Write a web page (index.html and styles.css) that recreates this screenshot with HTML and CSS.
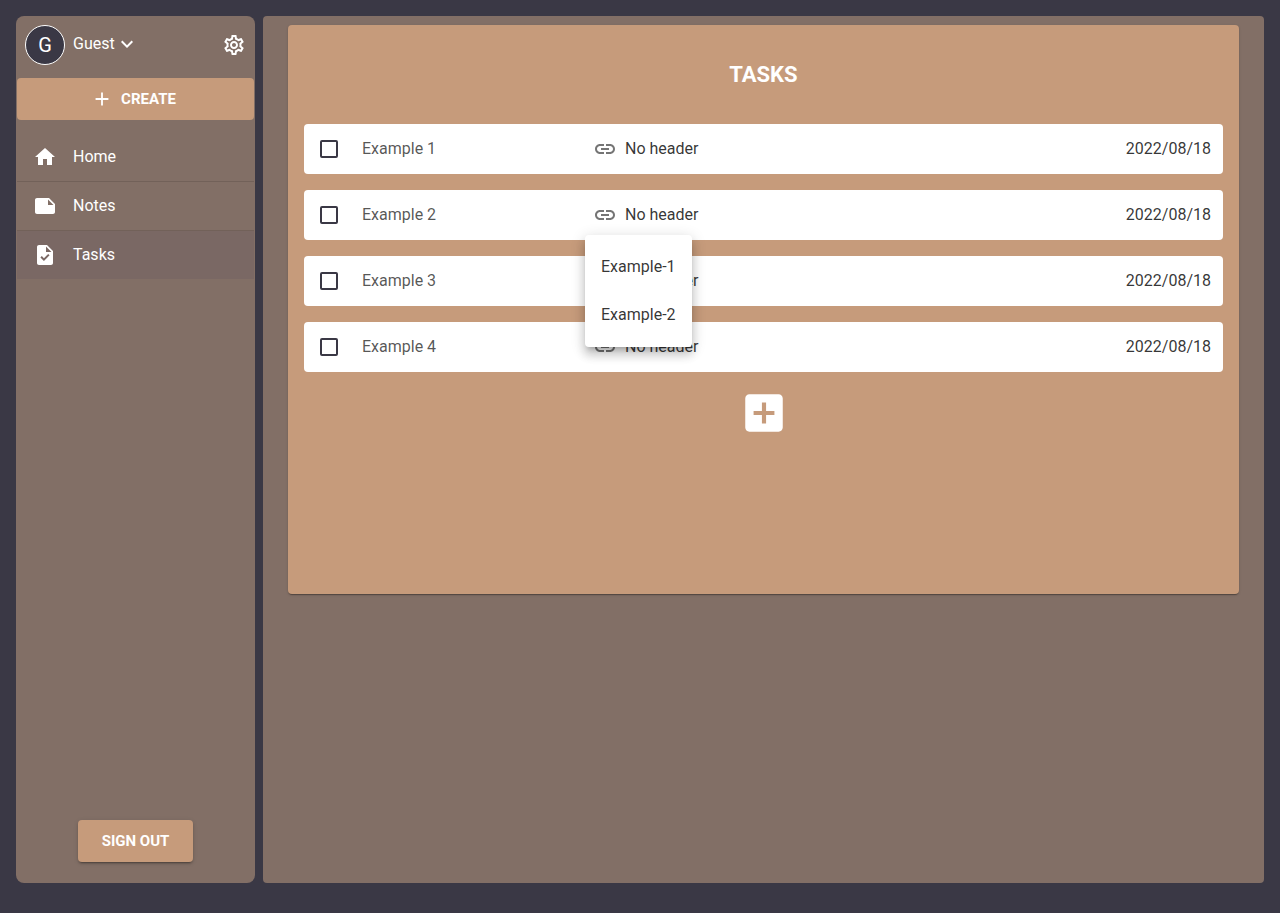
FILE: index.html
```html
<!DOCTYPE html>
<html lang="en">
<head>
  <meta charset="utf-8">
  <meta name="viewport" content="width=device-width, initial-scale=1">
  <title>Tasks</title>
  <link rel="stylesheet" href="styles.css">
</head>
<body>
  <svg class="sprite" aria-hidden="true">
    <symbol id="link" viewBox="0 0 24 24"><path d="M17 7h-4v2h4c1.65 0 3 1.35 3 3s-1.35 3-3 3h-4v2h4c2.76 0 5-2.24 5-5s-2.24-5-5-5zm-6 8H7c-1.65 0-3-1.35-3-3s1.35-3 3-3h4V7H7c-2.76 0-5 2.24-5 5s2.24 5 5 5h4v-2zm-3-4h8v2H8z"/></symbol>
  </svg>
  <div class="app">
    <aside class="sidebar">
      <header class="profile">
        <span class="avatar">G</span>
        <button class="account" type="button">Guest
          <svg class="chevron" viewBox="6 8 12 8" aria-hidden="true"><path d="M7.41 8.59 12 13.17l4.59-4.58L18 10l-6 6-6-6 1.41-1.41z"/></svg>
        </button>
        <button class="settings" type="button" aria-label="Settings">
          <svg class="icon" viewBox="0 0 24 24"><path d="M19.43 12.98c.04-.32.07-.64.07-.98 0-.34-.03-.66-.07-.98l2.11-1.65c.19-.15.24-.42.12-.64l-2-3.46c-.09-.16-.26-.25-.44-.25-.06 0-.12.01-.17.03l-2.49 1c-.52-.4-1.08-.73-1.69-.98l-.38-2.65C14.46 2.18 14.25 2 14 2h-4c-.25 0-.46.18-.49.42l-.38 2.65c-.61.25-1.17.59-1.69.98l-2.49-1c-.06-.02-.12-.03-.18-.03-.17 0-.34.09-.43.25l-2 3.46c-.13.22-.07.49.12.64l2.11 1.65c-.04.32-.07.65-.07.98 0 .33.03.66.07.98l-2.11 1.65c-.19.15-.24.42-.12.64l2 3.46c.09.16.26.25.44.25.06 0 .12-.01.17-.03l2.49-1c.52.4 1.08.73 1.69.98l.38 2.65c.03.24.24.42.49.42h4c.25 0 .46-.18.49-.42l.38-2.65c.61-.25 1.17-.59 1.69-.98l2.49 1c.06.02.12.03.18.03.17 0 .34-.09.43-.25l2-3.46c.12-.22.07-.49-.12-.64l-2.11-1.65zm-1.98-1.71c.04.31.05.52.05.73 0 .21-.02.43-.05.73l-.14 1.13.89.7 1.08.84-.7 1.21-1.27-.51-1.04-.42-.9.68c-.43.32-.84.56-1.25.73l-1.06.43-.16 1.13-.2 1.35h-1.4l-.19-1.35-.16-1.13-1.06-.43c-.43-.18-.83-.41-1.23-.71l-.91-.7-1.06.43-1.27.51-.7-1.21 1.08-.84.89-.7-.14-1.13c-.03-.31-.05-.54-.05-.74s.02-.43.05-.73l.14-1.13-.89-.7-1.08-.84.7-1.21 1.27.51 1.04.42.9-.68c.43-.32.84-.56 1.25-.73l1.06-.43.16-1.13.2-1.35h1.39l.19 1.35.16 1.13 1.06.43c.43.18.83.41 1.23.71l.91.7 1.06-.43 1.27-.51.7 1.21-1.07.85-.89.7.14 1.13zM12 8c-2.21 0-4 1.79-4 4s1.79 4 4 4 4-1.79 4-4-1.79-4-4-4zm0 6c-1.1 0-2-.9-2-2s.9-2 2-2 2 .9 2 2-.9 2-2 2z"/></svg>
        </button>
      </header>
      <button class="button create" type="button">
        <svg class="plus" viewBox="0 0 24 24" aria-hidden="true"><path d="M19 13h-6v6h-2v-6H5v-2h6V5h2v6h6v2z"/></svg>
        CREATE
      </button>
      <nav class="nav">
        <a class="nav-item" href="#home">
          <svg class="icon" viewBox="0 0 24 24" aria-hidden="true"><path d="M10 20v-6h4v6h5v-8h3L12 3 2 12h3v8z"/></svg>Home</a>
        <a class="nav-item" href="#notes">
          <svg class="icon" viewBox="0 0 24 24" aria-hidden="true"><path d="m22 10-6-6H4c-1.1 0-2 .9-2 2v12.01c0 1.1.9 1.99 2 1.99l16-.01c1.1 0 2-.89 2-1.99v-8zm-7-4.5 5.5 5.5H15V5.5z"/></svg>Notes</a>
        <a class="nav-item selected" href="#tasks" aria-current="page">
          <svg class="icon" viewBox="0 0 24 24" aria-hidden="true"><path d="M14 2H6c-1.1 0-1.99.9-1.99 2L4 20c0 1.1.89 2 1.99 2H18c1.1 0 2-.9 2-2V8l-6-6zm-3.06 16L7.4 14.46l1.41-1.41 2.12 2.12 4.24-4.24 1.41 1.41L10.94 18zM13 9V3.5L18.5 9H13z"/></svg>Tasks</a>
      </nav>
      <button class="button sign-out" type="button">SIGN OUT</button>
    </aside>

    <main class="content">
      <section class="card">
        <h1 class="title">TASKS</h1>
        <ul class="tasks">
          <li class="task">
            <input class="check" type="checkbox" id="task-1">
            <label class="name" for="task-1">Example 1</label>
            <div class="header-cell">
              <button class="header-link" type="button"><svg class="icon link-icon" aria-hidden="true"><use href="#link"/></svg>No header</button>
            </div>
            <time class="date" datetime="2022-08-18">2022/08/18</time>
          </li>
          <li class="task">
            <input class="check" type="checkbox" id="task-2">
            <label class="name" for="task-2">Example 2</label>
            <div class="header-cell">
              <button class="header-link" type="button" aria-haspopup="menu" aria-expanded="true"><svg class="icon link-icon" aria-hidden="true"><use href="#link"/></svg>No header</button>
              <div class="menu" role="menu">
                <button class="menu-item" type="button" role="menuitem">Example-1</button>
                <button class="menu-item" type="button" role="menuitem">Example-2</button>
              </div>
            </div>
            <time class="date" datetime="2022-08-18">2022/08/18</time>
          </li>
          <li class="task">
            <input class="check" type="checkbox" id="task-3">
            <label class="name" for="task-3">Example 3</label>
            <div class="header-cell">
              <button class="header-link" type="button"><svg class="icon link-icon" aria-hidden="true"><use href="#link"/></svg>No header</button>
            </div>
            <time class="date" datetime="2022-08-18">2022/08/18</time>
          </li>
          <li class="task">
            <input class="check" type="checkbox" id="task-4">
            <label class="name" for="task-4">Example 4</label>
            <div class="header-cell">
              <button class="header-link" type="button"><svg class="icon link-icon" aria-hidden="true"><use href="#link"/></svg>No header</button>
            </div>
            <time class="date" datetime="2022-08-18">2022/08/18</time>
          </li>
        </ul>
        <button class="add" type="button" aria-label="Add task">
          <svg class="add-icon" viewBox="0 0 24 24"><path d="M19 3H5c-1.11 0-2 .9-2 2v14c0 1.1.89 2 2 2h14c1.1 0 2-.9 2-2V5c0-1.1-.9-2-2-2zm-2 10h-4v4h-2v-4H7v-2h4V7h2v4h4v2z"/></svg>
        </button>
      </section>
    </main>
  </div>
</body>
</html>
```

FILE: styles.css
```css
:root {
  --ink: #3a3845;
  --brown: #826f66;
  --tan: #c69b7b;
  --text: rgba(0, 0, 0, 0.8);
}

* {
  box-sizing: border-box;
}

body {
  margin: 0;
  background: var(--ink);
  color: var(--text);
  font: 400 16px/24px Roboto, "Liberation Sans", sans-serif;
}

button {
  padding: 0;
  border: 0;
  background: none;
  color: inherit;
  font: inherit;
  cursor: pointer;
}

svg {
  display: block;
  flex: none;
  fill: currentColor;
}

.sprite {
  position: absolute;
  width: 0;
  height: 0;
}

.icon {
  width: 24px;
  height: 24px;
}

.app {
  display: grid;
  grid-template-columns: 239px minmax(0, 1fr);
  gap: 8px;
  min-height: 100vh;
  padding: 16px 16px 30px;
}

/* Sidebar */

.sidebar {
  display: flex;
  flex-direction: column;
  padding: 1px 1px 21px;
  border-radius: 8px;
  background: var(--brown);
  color: #fff;
}

.profile {
  display: flex;
  align-items: center;
  gap: 8px;
  padding: 8px 8px 13px;
}

.avatar {
  display: grid;
  place-items: center;
  width: 40px;
  height: 40px;
  border: 1px solid #fff;
  border-radius: 50%;
  background: var(--ink);
  font-size: 20px;
}

.account {
  display: flex;
  align-items: center;
  gap: 6px;
  padding-bottom: 2px;
}

.chevron {
  width: 12px;
  height: 8px;
}

.settings {
  margin-left: auto;
}

.button {
  display: flex;
  align-items: center;
  justify-content: center;
  gap: 8px;
  height: 42px;
  border-radius: 4px;
  background: var(--tan);
  font-size: 15px;
  font-weight: 700;
}

.plus {
  width: 22px;
  height: 22px;
  margin-left: -4px;
}

.nav {
  padding-top: 13px;
}

.nav-item {
  display: flex;
  align-items: center;
  gap: 16px;
  height: 49px;
  padding: 0 16px;
  border-bottom: 1px solid rgba(0, 0, 0, 0.12);
  color: inherit;
  text-decoration: none;
}

.nav-item.selected {
  height: 48px;
  border-bottom: 0;
  background: #7a6864;
}

.sign-out {
  align-self: center;
  margin-top: auto;
  padding: 0 24px;
  box-shadow: 0 3px 1px -2px rgba(0, 0, 0, 0.2), 0 2px 2px rgba(0, 0, 0, 0.14), 0 1px 5px rgba(0, 0, 0, 0.12);
}

/* Task board */

.content {
  padding: 9px 25px;
  border-radius: 4px;
  background: var(--brown);
}

.card {
  display: flex;
  flex-direction: column;
  align-items: center;
  min-height: 569px;
  padding: 34px 16px 16px;
  border-radius: 4px;
  background: var(--tan);
  box-shadow: 0 2px 1px -1px rgba(0, 0, 0, 0.2), 0 1px 1px rgba(0, 0, 0, 0.14), 0 1px 3px rgba(0, 0, 0, 0.12);
}

.title {
  margin: 0 0 33px;
  color: #fff;
  font-size: 22px;
  font-weight: 700;
  line-height: 32px;
}

.tasks {
  display: grid;
  gap: 16px;
  width: 100%;
  margin: 0 0 16px;
  padding: 0;
  list-style: none;
}

.task {
  display: grid;
  grid-template-columns: 18px 203px minmax(0, 1fr) auto;
  column-gap: 24px;
  align-items: center;
  height: 50px;
  padding: 0 12px 0 16px;
  border-radius: 4px;
  background: #fff;
}

.check {
  appearance: none;
  width: 18px;
  height: 18px;
  margin: 0;
  border: 2px solid var(--ink);
  border-radius: 2px;
}

.check:checked {
  background: var(--ink);
}

.name {
  color: rgba(0, 0, 0, 0.67);
}

.header-cell {
  position: relative;
}

.header-link {
  display: flex;
  align-items: center;
  gap: 8px;
  padding: 0 4px;
}

.link-icon {
  color: rgba(0, 0, 0, 0.54);
}

.menu {
  position: absolute;
  z-index: 1;
  top: 32px;
  left: -4px;
  padding: 8px 0;
  border-radius: 4px;
  background: #fff;
  box-shadow: 0 5px 5px -3px rgba(0, 0, 0, 0.2), 0 8px 10px 1px rgba(0, 0, 0, 0.14), 0 3px 14px 2px rgba(0, 0, 0, 0.12);
}

.menu-item {
  display: block;
  height: 48px;
  padding: 0 16px;
  white-space: nowrap;
}

.add {
  color: #fff;
}

.add-icon {
  width: 50px;
  height: 50px;
}
```
